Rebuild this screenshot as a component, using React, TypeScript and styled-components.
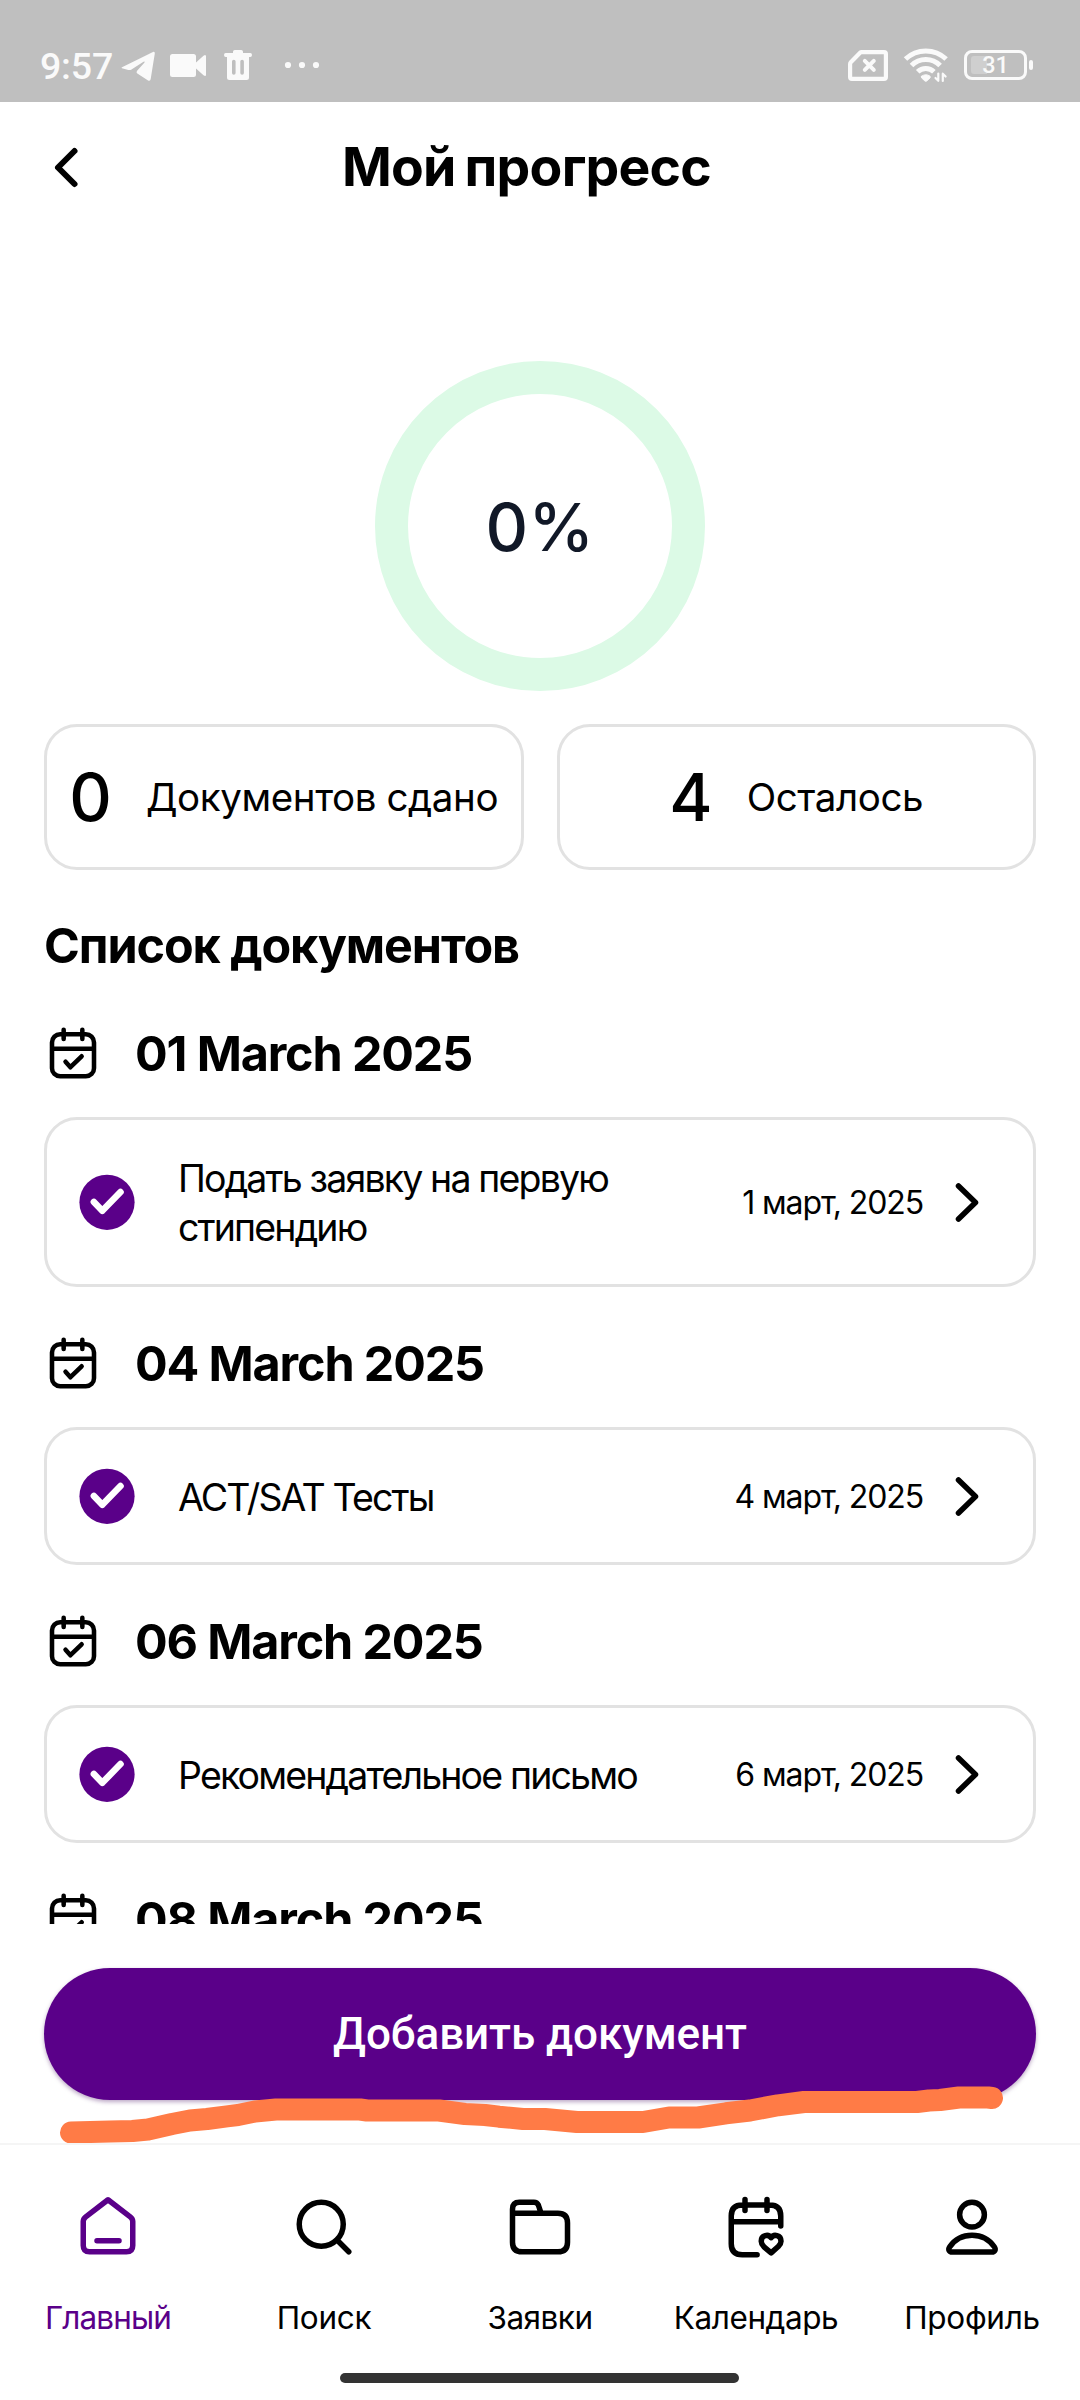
import React from "react";
import styled, { createGlobalStyle } from "styled-components";

const PURPLE = "#5a0089";

const GlobalStyle = createGlobalStyle`
  *, *::before, *::after { box-sizing: border-box; }
  body { margin: 0; background: #fff; }
  svg { display: block; flex: none; }
`;

const Screen = styled.div`
  width: 1080px;
  height: 2400px;
  display: flex;
  flex-direction: column;
  overflow: hidden;
  background: #fff;
  color: #000;
  font-family: Inter, "Noto Sans", sans-serif;
`;

/* ---------- status bar ---------- */

const StatusBar = styled.div`
  height: 102px;
  flex: none;
  display: flex;
  justify-content: space-between;
  align-items: flex-end;
  padding: 0 46px 12px 40px;
  background: #bfbfbf;
  color: #fafafa;
`;

const StatusGroup = styled.div`
  display: flex;
  align-items: center;
  height: 50px;
`;

const Clock = styled.span`
  width: 80px;
  font: 500 37.5px/44px Roboto, sans-serif;
  letter-spacing: -0.2px;
  padding-top: 2px;
`;

const Signal = styled.div`
  display: flex;
  align-items: center;
  gap: 14px;
`;

const Battery = styled.div`
  display: grid;
  align-items: center;
`;

const BatteryLevel = styled.span`
  grid-area: 1 / 1;
  width: 63px;
  padding-left: 0;
  text-align: center;
  font: 500 23.5px/30px Roboto, sans-serif;
`;

/* ---------- header ---------- */

const Header = styled.header`
  height: 129px;
  flex: none;
  display: grid;
  grid-template-columns: 66px 1fr 66px;
  align-items: center;
  padding: 0 59px 0 32px;
`;

const Title = styled.h1`
  margin: 0;
  text-align: center;
  font-size: 53.5px;
  line-height: 66px;
  font-weight: 700;
  letter-spacing: -0.75px;
  word-spacing: -3px;
`;

const BackButton = styled.button`
  border: 0;
  padding: 0;
  background: none;
  color: inherit;
`;

/* ---------- scrollable content ---------- */

const Content = styled.main`
  height: 1693px;
  flex: none;
  overflow: hidden;
  display: flex;
  flex-direction: column;
  padding: 130px 44px 0;
`;

const ProgressRing = styled.div`
  width: 330px;
  height: 330px;
  flex: none;
  align-self: center;
  display: flex;
  align-items: center;
  justify-content: center;
  border: 33px solid #dcfae6;
  border-radius: 50%;
  padding-top: 2px;
  font-size: 66px;
  font-weight: 500;
  letter-spacing: 0.4px;
  color: #111827;
`;

const Stats = styled.div`
  display: grid;
  grid-template-columns: 1fr 1fr;
  gap: 33px;
  margin-top: 33px;
  flex: none;
`;

const StatCard = styled.div`
  height: 146px;
  display: flex;
  align-items: center;
  justify-content: center;
  gap: 34px;
  border: 3px solid #e2e2e2;
  border-radius: 33px;
`;

const StatValue = styled.span`
  font-size: 66px;
  line-height: 80px;
  font-weight: 500;
`;

const StatLabel = styled.span`
  font-size: 38.5px;
  line-height: 48px;
  letter-spacing: -0.4px;
  white-space: nowrap;
`;

const ListTitle = styled.h2`
  margin: 45px 0 1px;
  flex: none;
  font-size: 48.5px;
  line-height: 61px;
  font-weight: 700;
  letter-spacing: -1.1px;
`;

const DayHeader = styled.div`
  flex: none;
  height: 56px;
  display: flex;
  align-items: center;
  gap: 34px;
  margin-top: 48px;
  padding-left: 1px;
`;

const DayTitle = styled.h3`
  margin: 0;
  padding-top: 2px;
  font-size: 48.5px;
  line-height: 54px;
  font-weight: 700;
  letter-spacing: -1.15px;
`;

const DocCard = styled.article<{ $tall?: boolean }>`
  flex: none;
  height: ${(p) => (p.$tall ? 170 : 138)}px;
  display: flex;
  align-items: center;
  margin-top: 36px;
  padding: 0 33px 0 27px;
  border: 3px solid #e2e2e2;
  border-radius: 33px;
`;

const DocName = styled.div`
  flex: 1;
  padding: 2px 60px 0 38px;
  font-size: 37.5px;
  line-height: 49px;
  letter-spacing: -1.85px;
`;

const DocDate = styled.div`
  padding: 2px 11px 0 0;
  font-size: 32px;
  line-height: 40px;
  letter-spacing: -1.1px;
  white-space: nowrap;
`;

/* ---------- footer ---------- */

const Footer = styled.footer`
  position: relative;
  height: 219px;
  flex: none;
  padding: 44px 44px 0;
`;

const AddButton = styled.button`
  display: block;
  width: 100%;
  height: 132px;
  border: 0;
  border-radius: 66px;
  padding: 0;
  background: ${PURPLE};
  box-shadow: 0 2px 4px rgba(60, 0, 90, 0.35);
  color: #fff;
  font: 500 44px/52px Roboto, sans-serif;
  letter-spacing: -0.08px;
`;

const Marker = styled.svg`
  position: absolute;
  left: 0;
  top: 0;
  z-index: 1;
`;

const TabBar = styled.nav`
  height: 230px;
  flex: none;
  display: grid;
  grid-template-columns: repeat(5, 216px);
  border-top: 2px solid #f5f5f5;
`;

const Tab = styled.a<{ $active?: boolean; $tracking: number }>`
  display: flex;
  flex-direction: column;
  align-items: center;
  gap: 38px;
  padding-top: 49px;
  color: ${(p) => (p.$active ? PURPLE : "#000")};
  font-size: 31.5px;
  line-height: 40px;
  letter-spacing: ${(p) => p.$tracking}px;
`;

const HomeIndicator = styled.div`
  width: 399px;
  height: 10px;
  margin: 0 0 0 340px;
  border-radius: 5px;
  background: #333;
`;

/* ---------- icons ---------- */

const stroke = {
  fill: "none",
  stroke: "currentColor",
  strokeLinecap: "round" as const,
  strokeLinejoin: "round" as const,
};

const NotificationIcons = () => (
  <svg width="200" height="34" viewBox="120 47 200 34" fill="currentColor">
    <path d="M122 66.3 153 51q2-.8 1.8 1.5L150.700 78q-.5 2.600-2.600 1.400L137.300 72.500q-1.500-1.200-.2-2.700L144.500 61.500q.6-1.400-1-.7L131.500 68.500q-1.500.9-3.200.4L122 67.200q-1-.4 0-.9Z" />
    <path d="M172.500 53h21q2.500 0 2.500 2.500v6l7.500-6.700q2.500-1.800 2.500.8v17.800q0 2.600-2.500.8L196 67.500v6q0 2.500-2.500 2.500h-21q-2.500 0-2.500-2.500v-18q0-2.500 2.500-2.500Z" />
    <path
      fillRule="evenodd"
      d="M233 52v-1.200q0-1.800 1.800-1.800h6.400q1.800 0 1.800 1.800V52h7.300q1.700 0 1.700 2t-1.700 2H249v20.500q0 2.500-2.500 2.500h-17q-2.500 0-2.500-2.500V56h-1.300q-1.700 0-1.700-2t1.700-2ZM232 60.500v11.500a1.700 1.700 0 0 0 3.600 0V60.500a1.700 1.700 0 0 0-3.600 0ZM240.300 60.500v11.500a1.700 1.700 0 0 0 3.600 0V60.500a1.700 1.700 0 0 0-3.600 0Z"
    />
    <circle cx="288" cy="64" r="3.100" />
    <circle cx="302" cy="64" r="3.100" />
    <circle cx="316" cy="64" r="3.100" />
  </svg>
);

const SimIcon = () => (
  <svg width="40" height="36" viewBox="848 47 40 36" {...stroke} strokeWidth="4.200">
    <path d="M861.500 52.100H884q1.900 0 1.900 1.900v23q0 1.900-1.900 1.900H852q-1.900 0-1.900-1.900V64q0-1 .7-1.700l9.300-9.600q.6-.6 1.400-.6Z" />
    <path d="m864.800 60.800 9 9m0-9-9 9" strokeWidth="4" />
  </svg>
);

const WifiIcon = () => (
  <svg width="48" height="36" viewBox="902 47 48 36" {...stroke}>
    <path d="M905.500 59a29.500 29.500 0 0 1 40.600 0" strokeWidth="5" strokeLinecap="butt" />
    <path d="M911.500 65.600a20 20 0 0 1 28.600 0" strokeWidth="5" strokeLinecap="butt" />
    <path d="M917.700 71.800a11.500 11.500 0 0 1 16.200 0" strokeWidth="5" strokeLinecap="butt" />
    <path d="M921.600 76.200q4.200-3 8.400 0 .6.900 0 1.700l-3.200 3q-1 .8-2 0l-3.200-3q-.6-.8 0-1.700Z" fill="currentColor" />
    <path d="M938.300 73.500v7.300l-2.800-2.800M942.800 81v-7.300l2.800 2.800" strokeWidth="2.200" />
  </svg>
);

const BatteryShape = styled.svg`
  grid-area: 1 / 1;
`;

const BatteryIcon = () => (
  <BatteryShape width="70" height="30" viewBox="964 49 70 30" fill="none">
    <rect x="965.500" y="50.500" width="60" height="27" rx="6.500" stroke="currentColor" strokeWidth="3" />
    <path d="M987 55h-13q-3 0-3 3v12q0 3 3 3h13Z" fill="#cfcfcf" />
    <rect x="1029" y="59" width="4" height="10" rx="2" fill="currentColor" />
  </BatteryShape>
);

const BackIcon = () => (
  <svg width="66" height="66" viewBox="32 134 66 66" {...stroke} strokeWidth="6">
    <path d="M74.500 151 58 167.500 74.500 184" />
  </svg>
);

const CalendarCheckIcon = () => (
  <svg width="56" height="56" viewBox="0 0 24 24" {...stroke} strokeWidth="1.950">
    <path d="M6.500 4h11A3.500 3.500 0 0 1 21 7.500v11a3.500 3.500 0 0 1-3.500 3.500h-11A3.500 3.500 0 0 1 3 18.500v-11A3.500 3.500 0 0 1 6.500 4ZM3 10.200h18M8 2v4M16 2v4M8.800 15.700l2.100 2.400 4.800-4.700" />
  </svg>
);

const CheckIcon = () => (
  <svg width="66" height="66" viewBox="0 0 66 66">
    <circle cx="33" cy="33.300" r="27.600" fill={PURPLE} />
    <path d="M19.900 33 28.300 41.800 46.500 23" {...stroke} stroke="#fff" strokeWidth="6.600" />
  </svg>
);

const ChevronIcon = () => (
  <svg width="66" height="66" viewBox="0 0 66 66" {...stroke} strokeWidth="5.500">
    <path d="M24.500 17 41.500 33.500 24.500 50" />
  </svg>
);

const TabIcon = ({ children }: { children: React.ReactNode }) => (
  <svg width="66" height="66" viewBox="0 0 24 24" {...stroke} strokeWidth="2">
    {children}
  </svg>
);

/* ---------- data ---------- */

type Doc = { name: string; date: string; tall?: boolean };

const days: { day: string; docs: Doc[] }[] = [
  { day: "01 March 2025", docs: [{ name: "Подать заявку на первую стипендию", date: "1 март, 2025", tall: true }] },
  { day: "04 March 2025", docs: [{ name: "ACT/SAT Тесты", date: "4 март, 2025" }] },
  { day: "06 March 2025", docs: [{ name: "Рекомендательное письмо", date: "6 март, 2025" }] },
  { day: "08 March 2025", docs: [] },
];

const tabs = [
  {
    label: "Главный",
    tracking: -0.9,
    icon: <path d="M12 2.100 20.100 8.300Q21 9 21 10v8.700q0 2.300-2.300 2.300H5.300Q3 21 3 18.700V10q0-1 .9-1.700ZM8 17h8" />,
  },
  {
    label: "Поиск",
    tracking: -0.3,
    icon: (
      <>
        <circle cx="11" cy="11" r="8" />
        <path d="m17 17 4 4" />
      </>
    ),
  },
  {
    label: "Заявки",
    tracking: -0.5,
    icon: (
      <path d="M2 7h16.500Q22 7 22 10.500v7q0 3.500-3.500 3.500h-13Q2 21 2 17.500v-12Q2 3 4.500 3h5.300q1.100 0 1.600 1l1 3" />
    ),
  },
  {
    label: "Календарь",
    tracking: -0.45,
    icon: (
      <>
        <path d="M12.400 22.100H7q-4 0-4-4V8q0-4 4-4h10q4 0 4 4v3.600M3 10.100h17.500M8 2v4M16 2v4" />
        <path d="M17.500 15.900c-.9-1.400-3.600-1.100-3.600 1.300 0 1 .5 1.500 1 2l2.600 2.200 2.600-2.300c.5-.5 1-1 1-1.900 0-2.400-2.700-2.700-3.600-1.300Z" />
      </>
    ),
  },
  {
    label: "Профиль",
    tracking: -0.3,
    icon: (
      <>
        <circle cx="12" cy="7.500" r="4.500" />
        <path d="M12 15c3.700 0 6.500 1.900 8.100 4.200.7 1 .2 1.900-.9 1.900H4.800c-1.100 0-1.600-.9-.9-1.900C5.500 16.900 8.300 15 12 15Z" />
      </>
    ),
  },
];

export default function App() {
  return (
    <Screen>
      <GlobalStyle />
      <StatusBar>
        <StatusGroup>
          <Clock>9:57</Clock>
          <NotificationIcons />
        </StatusGroup>
        <Signal as={StatusGroup}>
          <SimIcon />
          <WifiIcon />
          <Battery>
            <BatteryIcon />
            <BatteryLevel>31</BatteryLevel>
          </Battery>
        </Signal>
      </StatusBar>

      <Header>
        <BackButton aria-label="Назад">
          <BackIcon />
        </BackButton>
        <Title>Мой прогресс</Title>
      </Header>

      <Content>
        <ProgressRing>0%</ProgressRing>
        <Stats>
          <StatCard>
            <StatValue>0</StatValue>
            <StatLabel>Документов сдано</StatLabel>
          </StatCard>
          <StatCard>
            <StatValue>4</StatValue>
            <StatLabel>Осталось</StatLabel>
          </StatCard>
        </Stats>
        <ListTitle>Список документов</ListTitle>
        {days.map(({ day, docs }) => (
          <React.Fragment key={day}>
            <DayHeader>
              <CalendarCheckIcon />
              <DayTitle>{day}</DayTitle>
            </DayHeader>
            {docs.map((d) => (
              <DocCard key={d.name} $tall={d.tall}>
                <CheckIcon />
                <DocName>{d.name}</DocName>
                <DocDate>{d.date}</DocDate>
                <ChevronIcon />
              </DocCard>
            ))}
          </React.Fragment>
        ))}
      </Content>

      <Footer>
        <AddButton>Добавить документ</AddButton>
        <Marker width="1080" height="219" viewBox="0 1924 1080 219" {...stroke} stroke="#ff7b46" strokeWidth="22">
          <path d="M71 2132.500 110 2131.500 132.500 2131 148 2129.500 172 2124 190 2120.500 207 2119 227 2116.300 238 2115 255 2111.500 276 2109.500H360L367 2110.500H439L465 2114 485 2115 499 2116.700 523 2119H545L577 2122H643L669 2117.500H698L726 2113.300 750 2110.500 778 2105.300 804 2102H917L929 2100.500 940 2100 959 2097.500H988L992 2098" />
        </Marker>
      </Footer>

      <TabBar>
        {tabs.map((t, i) => (
          <Tab key={t.label} $active={i === 0} $tracking={t.tracking}>
            <TabIcon>{t.icon}</TabIcon>
            {t.label}
          </Tab>
        ))}
      </TabBar>
      <HomeIndicator />
    </Screen>
  );
}
